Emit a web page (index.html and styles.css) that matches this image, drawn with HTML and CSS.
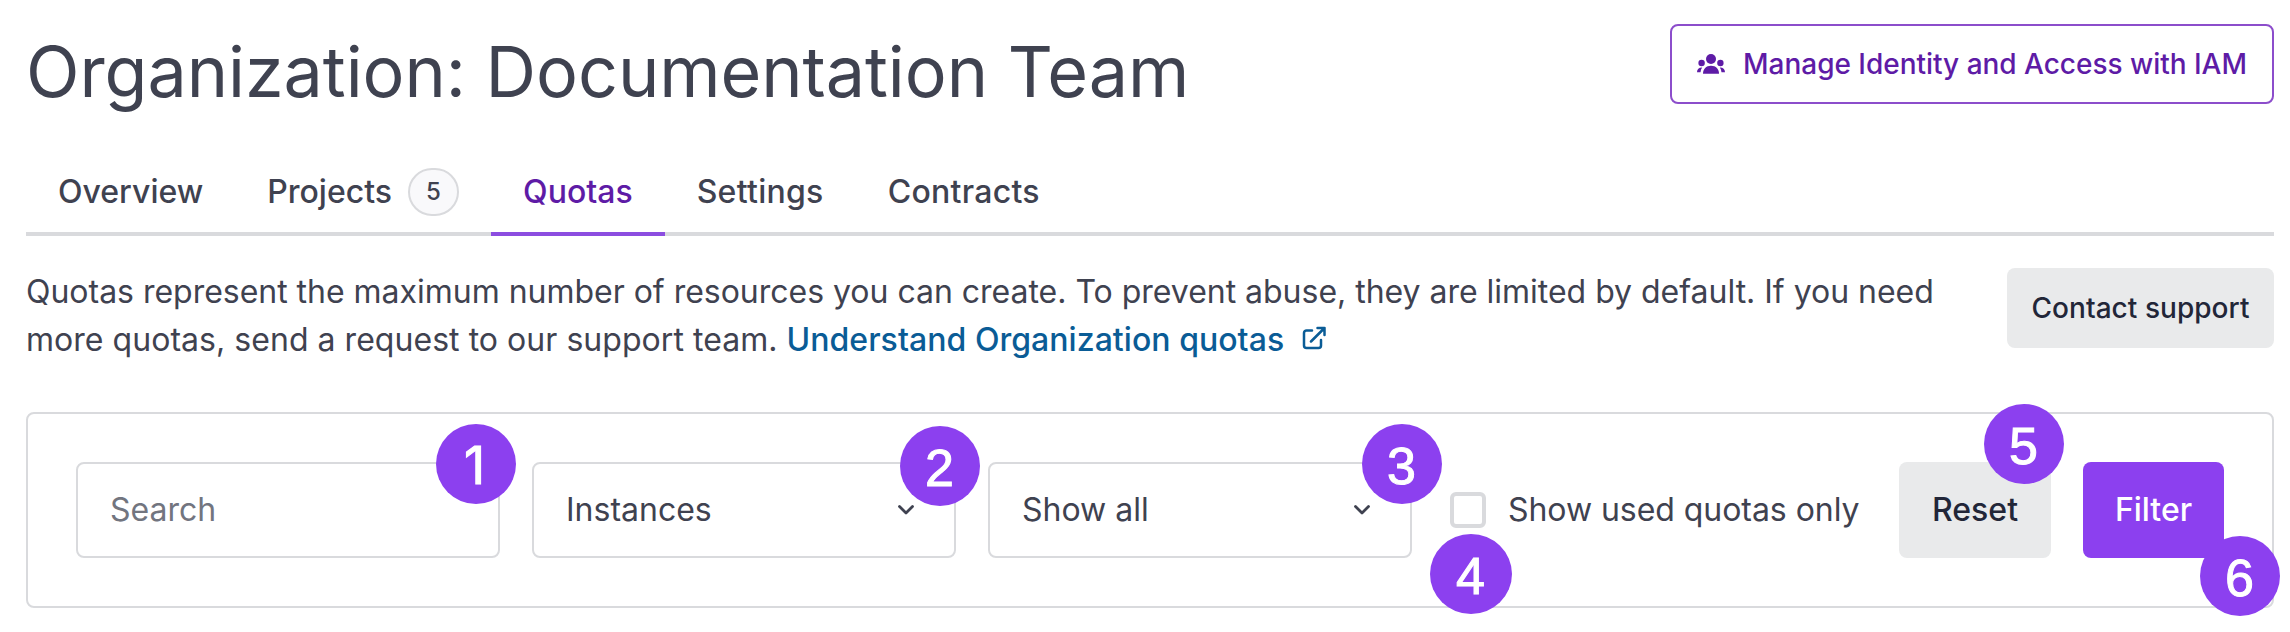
FILE: index.html
```html
<!DOCTYPE html>
<html lang="en">
<head>
<meta charset="utf-8">
<title>Organization quotas</title>
<link rel="stylesheet" href="styles.css">
</head>
<body>
<main class="page">
  <header class="header">
    <h1 class="title">Organization: Documentation Team</h1>
    <button class="btn btn-outline">
      <svg class="icon-group" viewBox="0 0 28 20" fill="currentColor"><circle cx="14" cy="5" r="5"/><circle cx="4.6" cy="9" r="3.2"/><circle cx="23.4" cy="9" r="3.2"/><path d="M6 19.8c0-4.600 3-8 8-8s8 3.400 8 8z"/><path d="M0 18.200c0-2.800 2-4.700 5.200-4.600-.9 1.300-1.500 2.800-1.700 4.600zM28 18.200c0-2.800-2-4.700-5.200-4.600.9 1.300 1.500 2.800 1.700 4.600z"/></svg>
      <span>Manage Identity and Access with IAM</span>
    </button>
  </header>
  <nav class="tabs">
    <a class="tab">Overview</a>
    <a class="tab">Projects <span class="count">5</span></a>
    <a class="tab tab-active">Quotas</a>
    <a class="tab tab-wide">Settings</a>
    <a class="tab tab-wide">Contracts</a>
  </nav>
  <section class="intro">
    <p class="intro-text"><span class="line-first">Quotas represent the maximum number of resources you can create. To prevent abuse, they are limited by default. If you need</span><br><span class="line-second">more quotas, send a request to our support team. <a class="link">Understand Organization quotas<svg class="icon-ext" viewBox="0 0 24 24" fill="none" stroke="currentColor" stroke-width="2.500" stroke-linecap="round" stroke-linejoin="round"><path d="M10 4.500H4.500A2.500 2.500 0 0 0 2 7v12.500A2.500 2.500 0 0 0 4.500 22h12a2.500 2.500 0 0 0 2.500-2.500V14M15.500 2H22.500V9M22.500 2L9 15.500"/></svg></a></span></p>
    <button class="btn btn-grey">Contact support</button>
  </section>
  <section class="panel">
    <div class="field field-search">Search<span class="marker m1">1</span></div>
    <div class="field">Instances<svg class="chevron" viewBox="0 0 16 12" fill="none" stroke="currentColor" stroke-width="2.800" stroke-linecap="round" stroke-linejoin="round"><path d="M1.500 2.500L8 9l6.500-6.500"/></svg><span class="marker m2">2</span></div>
    <div class="field">Show all<svg class="chevron" viewBox="0 0 16 12" fill="none" stroke="currentColor" stroke-width="2.800" stroke-linecap="round" stroke-linejoin="round"><path d="M1.500 2.500L8 9l6.500-6.500"/></svg><span class="marker m3">3</span></div>
    <div class="check"><span class="box"><span class="marker m4">4</span></span><span class="check-label">Show used quotas only</span></div>
    <button class="btn btn-lg btn-grey reset">Reset<span class="marker m5">5</span></button>
    <button class="btn btn-lg btn-filter">Filter<span class="marker m6">6</span></button>
  </section>
</main>
</body>
</html>
```
FILE: styles.css
```css
* { box-sizing: border-box; }
body { margin: 0; background: #fff; color: #3f4250; font-family: Inter, "Liberation Sans", sans-serif; font-size: 32px; line-height: 48px; }
.page { padding: 24px 16px 0 26px; width: 2290px; height: 632px; }
.header { display: flex; justify-content: space-between; align-items: flex-start; height: 128px; }
.title { margin: 0; font-size: 70px; line-height: 96px; font-weight: 400; white-space: nowrap; letter-spacing: -0.05px; }
.btn { position: relative; display: flex; align-items: center; justify-content: center; height: 80px; flex: none; border: 0; border-radius: 8px; font: 500 28px/40px Inter, sans-serif; white-space: nowrap; padding: 0; }
.btn-outline { width: 604px; gap: 18px; background: #fff; border: 2px solid #8c4dcb; color: #5e1ba6; letter-spacing: -0.02px; }
.icon-group { width: 28px; height: 20px; }
.btn-grey { background: #e9eaeb; color: #222638; width: 267px; letter-spacing: 0.04px; }
.tabs { display: flex; height: 84px; border-bottom: 4px solid #d9dadd; }
.tab { display: flex; align-items: center; justify-content: center; height: 84px; padding: 0 32px 4px; font-weight: 500; }
.tab-active { color: #5e1ba6; border-bottom: 4px solid #8c4de0; padding-bottom: 0; }
.tab-wide { letter-spacing: 0.28px; }
.count { display: flex; align-items: center; justify-content: center; width: 51px; height: 48px; margin-left: 16px; border: 2px solid #d9dadd; border-radius: 24px; background: #f9f9fb; font-size: 24px; }
.intro { display: flex; justify-content: space-between; align-items: flex-start; padding-top: 32px; height: 176px; }
.intro-text { margin: 0; white-space: nowrap; }
.line-first { letter-spacing: -0.018px; }
.line-second { letter-spacing: 0.04px; }
.link { color: #0a5c96; font-weight: 500; }
.icon-ext { width: 24px; height: 24px; margin-left: 18px; vertical-align: 1px; }
.panel { display: flex; align-items: center; height: 196px; border: 2px solid #d9dadd; border-radius: 8px; padding: 0 48px; }
.field { position: relative; display: flex; align-items: center; justify-content: space-between; width: 424px; height: 96px; margin-right: 32px; padding: 0 40px 0 32px; border: 2px solid #d9dadd; border-radius: 8px; }
.field-search { color: #72757f; }
.chevron { width: 16px; height: 12px; }
.check { display: flex; align-items: center; width: 449px; margin-left: 6px; gap: 22px; white-space: nowrap; }
.check-label { letter-spacing: -0.05px; }
.box { position: relative; width: 36px; height: 36px; border: 4px solid #d9dadd; border-radius: 6px; }
.btn-lg { height: 96px; font-size: 32px; }
.reset { width: 152px; margin-right: 32px; }
.btn-filter { width: 141px; background: #8c40ef; color: #fff; }
.marker { position: absolute; z-index: 1; display: flex; align-items: center; justify-content: center; width: 80px; height: 80px; padding: 3px 1px 0 0; border-radius: 50%; background: #8c40ef; color: #fff; font: 400 52px/80px "Liberation Sans", sans-serif; letter-spacing: 0; -webkit-text-stroke: 1px #fff; }
.m1 { left: 358px; top: -40px; padding-right: 3px; font-family: Inter, "Liberation Sans", sans-serif; }
.m2 { left: 366px; top: -38px; }
.m3 { left: 372px; top: -40px; }
.m4 { left: -24px; top: 38px; width: 82px; }
.m5 { left: 85px; top: -58px; }
.m6 { left: 117px; top: 74px; }
```
